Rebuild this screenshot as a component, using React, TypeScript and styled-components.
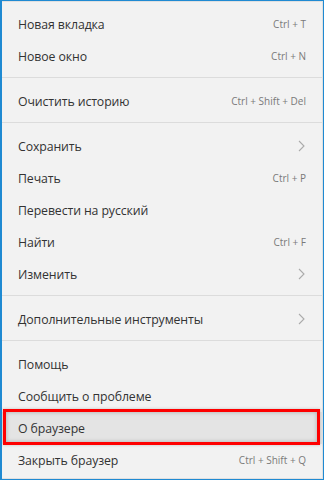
import styled, { createGlobalStyle } from "styled-components";

const GlobalStyle = createGlobalStyle`
  html, body {
    margin: 0;
    padding: 0;
    background: #f2f2f2;
  }
`;

const Frame = styled.div`
  width: 324px;
  height: 480px;
  box-sizing: border-box;
  border: 1px solid #1f8ad2;
  border-left-width: 2px;
  background: #f2f2f2;
  font-family: "Open Sans", "Noto Sans", sans-serif;
`;

const Menu = styled.div`
  height: 100%;
  box-sizing: border-box;
  border: 1px solid #e0e0e0;
  border-left: none;
  padding-top: 6px;
  display: flex;
  flex-direction: column;
`;

const Row = styled.div<{ $active?: boolean }>`
  position: relative;
  height: 32px;
  display: flex;
  align-items: center;
  justify-content: space-between;
  padding: 0 16px 0 16px;
  background: ${(p) => (p.$active ? "#e4e4e4" : "transparent")};

  ${(p) =>
    p.$active &&
    `
    &::after {
      content: "";
      position: absolute;
      left: 1px;
      right: 2px;
      top: -3px;
      bottom: -1px;
      border: 3px solid #fe0000;
      box-shadow: inset 0 0 4px rgba(0, 0, 0, 0.25), 0 0 3px rgba(0, 0, 0, 0.2);
    }
  `}
`;

const Label = styled.span`
  font-size: 12.3px;
  color: #333;
  letter-spacing: -0.1px;
`;

const Shortcut = styled.span`
  font-size: 10px;
  color: #7a7a7a;
`;

const Separator = styled.div`
  height: 1px;
  margin: 5px 0 7px;
  background: #dcdcdc;
`;

const Chevron = () => (
  <svg width="7" height="12" viewBox="0 0 7 12" style={{ marginRight: 1 }}>
    <path d="M1 1 L6 6 L1 11" fill="none" stroke="#ababab" strokeWidth="1.1" />
  </svg>
);

type Item = { label: string; shortcut?: string; sub?: boolean; active?: boolean } | "sep";

const items: Item[] = [
  { label: "Новая вкладка", shortcut: "Ctrl + T" },
  { label: "Новое окно", shortcut: "Ctrl + N" },
  "sep",
  { label: "Очистить историю", shortcut: "Ctrl + Shift + Del" },
  "sep",
  { label: "Сохранить", sub: true },
  { label: "Печать", shortcut: "Ctrl + P" },
  { label: "Перевести на русский" },
  { label: "Найти", shortcut: "Ctrl + F" },
  { label: "Изменить", sub: true },
  "sep",
  { label: "Дополнительные инструменты", sub: true },
  "sep",
  { label: "Помощь" },
  { label: "Сообщить о проблеме" },
  { label: "О браузере", active: true },
  { label: "Закрыть браузер", shortcut: "Ctrl + Shift + Q" },
];

const App = () => {
  return (
    <>
      <GlobalStyle />
      <Frame>
        <Menu>
          {items.map((it, i) =>
            it === "sep" ? (
              <Separator key={i} />
            ) : (
              <Row key={i} $active={it.active}>
                <Label>{it.label}</Label>
                {it.shortcut && <Shortcut>{it.shortcut}</Shortcut>}
                {it.sub && <Chevron />}
              </Row>
            )
          )}
        </Menu>
      </Frame>
    </>
  );
};

export default App;
